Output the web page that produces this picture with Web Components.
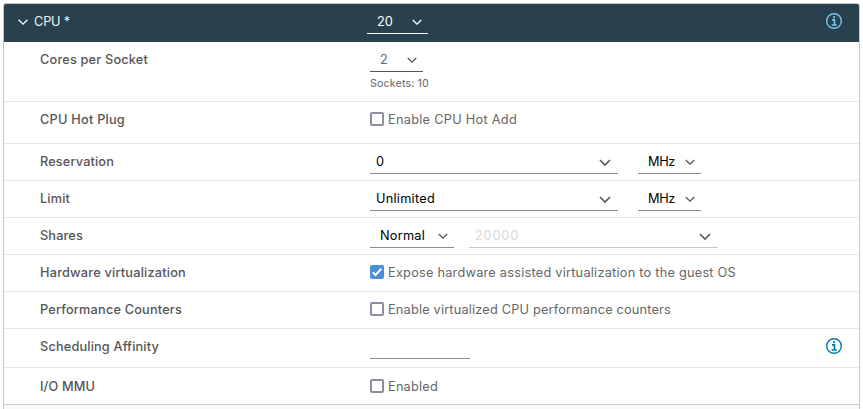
<!DOCTYPE html>
<html lang="en"><head><meta charset="utf-8"><title>CPU settings</title>
<style>
body{margin:0;background:#fff;overflow:hidden;font-family:Inter,"Liberation Sans",sans-serif;font-size:12.75px;line-height:23px;color:#666}
</style></head><body>
<hw-panel>
<hw-row head style="--h:38px">
  <hw-text slot="label" w="36">CPU *</hw-text>
  <hw-select slot="value" style="--w:61px;--pl:10px;--pr:6px;--line:#fff;margin-left:-3px"><hw-text w="16">20</hw-text></hw-select>
  <hw-info slot="end"></hw-info>
</hw-row>
<hw-row style="--h:60px">
  <hw-text slot="label" w="108">Cores per Socket</hw-text>
  <div slot="value"><hw-select style="--w:53px;--pl:10px;--pr:6px;--line:#555"><hw-text w="8">2</hw-text></hw-select>
  <hw-text w="59" style="font-size:10.7px;line-height:24px">Sockets: 10</hw-text></div>
</hw-row>
<hw-row style="--h:42px">
  <hw-text slot="label" w="85">CPU Hot Plug</hw-text>
  <hw-check slot="value"><hw-text w="129">Enable CPU Hot Add</hw-text></hw-check>
</hw-row>
<hw-row>
  <hw-text slot="label" w="74">Reservation</hw-text>
  <hw-select slot="value" big style="--w:248px;--pl:6px;--pr:7px;color:#000"><hw-text w="9">0</hw-text></hw-select>
  <hw-select slot="value" style="--w:63px;--pl:10px;--pr:6px;color:#000;margin-left:20px"><hw-text w="27">MHz</hw-text></hw-select>
</hw-row>
<hw-row>
  <hw-text slot="label" w="30">Limit</hw-text>
  <hw-select slot="value" big style="--w:248px;--pl:6px;--pr:7px;color:#000"><hw-text w="59">Unlimited</hw-text></hw-select>
  <hw-select slot="value" style="--w:63px;--pl:10px;--pr:6px;color:#000;margin-left:20px"><hw-text w="27">MHz</hw-text></hw-select>
</hw-row>
<hw-row>
  <hw-text slot="label" w="43">Shares</hw-text>
  <hw-select slot="value" style="--w:84px;--pl:10px;--pr:6px;color:#000"><hw-text w="45">Normal</hw-text></hw-select>
  <hw-select slot="value" big style="--w:249px;--pl:6px;--pr:7px;--line:#c8c8c8;color:#d8d8d8;margin-left:15px"><hw-text w="44">20000</hw-text></hw-select>
</hw-row>
<hw-row>
  <hw-text slot="label" w="146">Hardware virtualization</hw-text>
  <hw-check slot="value" checked><hw-text w="348">Expose hardware assisted virtualization to the guest OS</hw-text></hw-check>
</hw-row>
<hw-row>
  <hw-text slot="label" w="142">Performance Counters</hw-text>
  <hw-check slot="value"><hw-text w="283">Enable virtualized CPU performance counters</hw-text></hw-check>
</hw-row>
<hw-row style="--h:39px">
  <hw-text slot="label" w="119">Scheduling Affinity</hw-text>
  <hw-select slot="value" plain style="--w:100px"></hw-select>
  <hw-info slot="end"></hw-info>
</hw-row>
<hw-row style="--pt:7px;--sep:#ccc">
  <hw-text slot="label" w="55">I/O MMU</hw-text>
  <hw-check slot="value"><hw-text w="50">Enabled</hw-text></hw-check>
</hw-row>
</hw-panel>
<script>
const define = (name, html, init) => customElements.define(name, class extends HTMLElement {
  connectedCallback() {
    if (this.shadowRoot) return;
    this.attachShadow({mode: 'open'}).innerHTML = html;
    if (init) init(this);
  }
});
define('hw-panel', `<style>:host{display:block;box-sizing:border-box;width:857px;height:406px;margin:3px 0 0 3px;border:1px solid #c6c6c6;border-bottom:0;background:#f9f9f9;border-radius:3px 3px 0 0}</style><slot></slot>`);
define('hw-row', `<style>
:host{display:grid;grid-template-columns:330px 1fr auto;box-sizing:border-box;height:var(--h,37px);padding:var(--pt,6px) 17px 0 36px;border-bottom:1px solid var(--sep,#e8e8e8);background:#fff}
:host([head]){background:#29414e;border:0;color:#fff;padding-left:14px;grid-template-columns:352px 1fr auto;--tone:#fff;--info:#79c6e6;border-radius:2px 2px 0 0}
.label{display:flex;color:#565656;font-weight:450;height:24px}
:host([head]) .label{color:#f4f4f4;gap:6px;font-weight:400}
:host(:not([head])) svg{display:none}
svg{margin-top:8px}
.value{display:flex;align-items:flex-start}
.end{padding-top:3px}
</style><div class="label"><svg width="10" height="8" viewBox="0 0 10 8" fill="none" stroke="#fff" stroke-width="1.3"><path d="M.6 1.8 5 6.2 9.4 1.8"/></svg><slot name="label"></slot></div><div class="value"><slot name="value"></slot></div><div class="end"><slot name="end"></slot></div>`);
/* Text with an optional advance width, reached by even tracking. */
define('hw-text', `<style>:host{display:block;white-space:nowrap}span{display:inline-block}</style><span><slot></slot></span>`, el => {
  const w = +el.getAttribute('w'), n = el.textContent.length;
  if (!w) return;
  const s = el.shadowRoot.querySelector('span');
  s.style.letterSpacing = ((w - s.getBoundingClientRect().width) / n).toFixed(3) + 'px';
});
define('hw-select', `<style>
:host{display:flex;flex:none;justify-content:space-between;box-sizing:border-box;width:var(--w);height:24px;padding:0 var(--pr,0) 0 var(--pl,0);border-bottom:1px solid var(--line,#8c8c8c)}
svg{margin-top:9px;fill:none;stroke:var(--tone,#565656);stroke-width:1.3}
.b{display:none;stroke-width:1.6}
:host([big]) .b{display:block}:host([big]) .s,:host([plain]) svg{display:none}
</style><slot></slot><svg class="s" width="10" height="7" viewBox="0 0 10 7"><path d="M.8 1 5 5.2 9.2 1"/></svg><svg class="b" width="12" height="8" viewBox="0 0 12 8"><path d="M1 1 6 6 11 1"/></svg>`);
define('hw-check', `<style>
:host{display:flex;gap:4px}
i{box-sizing:border-box;width:14px;height:14px;margin-top:4px;border:2px solid #8f8c9f;border-radius:2px}
svg{display:none}
:host([checked]) i{border:0;background:#4a90d9}:host([checked]) svg{display:block}
</style><i><svg width="14" height="14" viewBox="0 0 14 14" fill="none" stroke="#fff" stroke-width="2"><path d="M2.7 7.2 5.6 10 11.3 3.8"/></svg></i><slot></slot>`);
define('hw-info', `<style>:host{display:block;width:16px;height:16px}svg{display:block;color:var(--info,#0079ad)}</style>
<svg width="16" height="16" viewBox="0 0 16 16" fill="none" stroke="currentColor"><circle cx="8" cy="8" r="7.3" stroke-width="1.4"/><path d="M6 6.9h2.5v4.7M5.6 12h5.2" stroke-width="1.6"/><circle cx="8.1" cy="4.2" r="1.1" fill="currentColor" stroke="none"/></svg>`);
</script>
</body></html>
